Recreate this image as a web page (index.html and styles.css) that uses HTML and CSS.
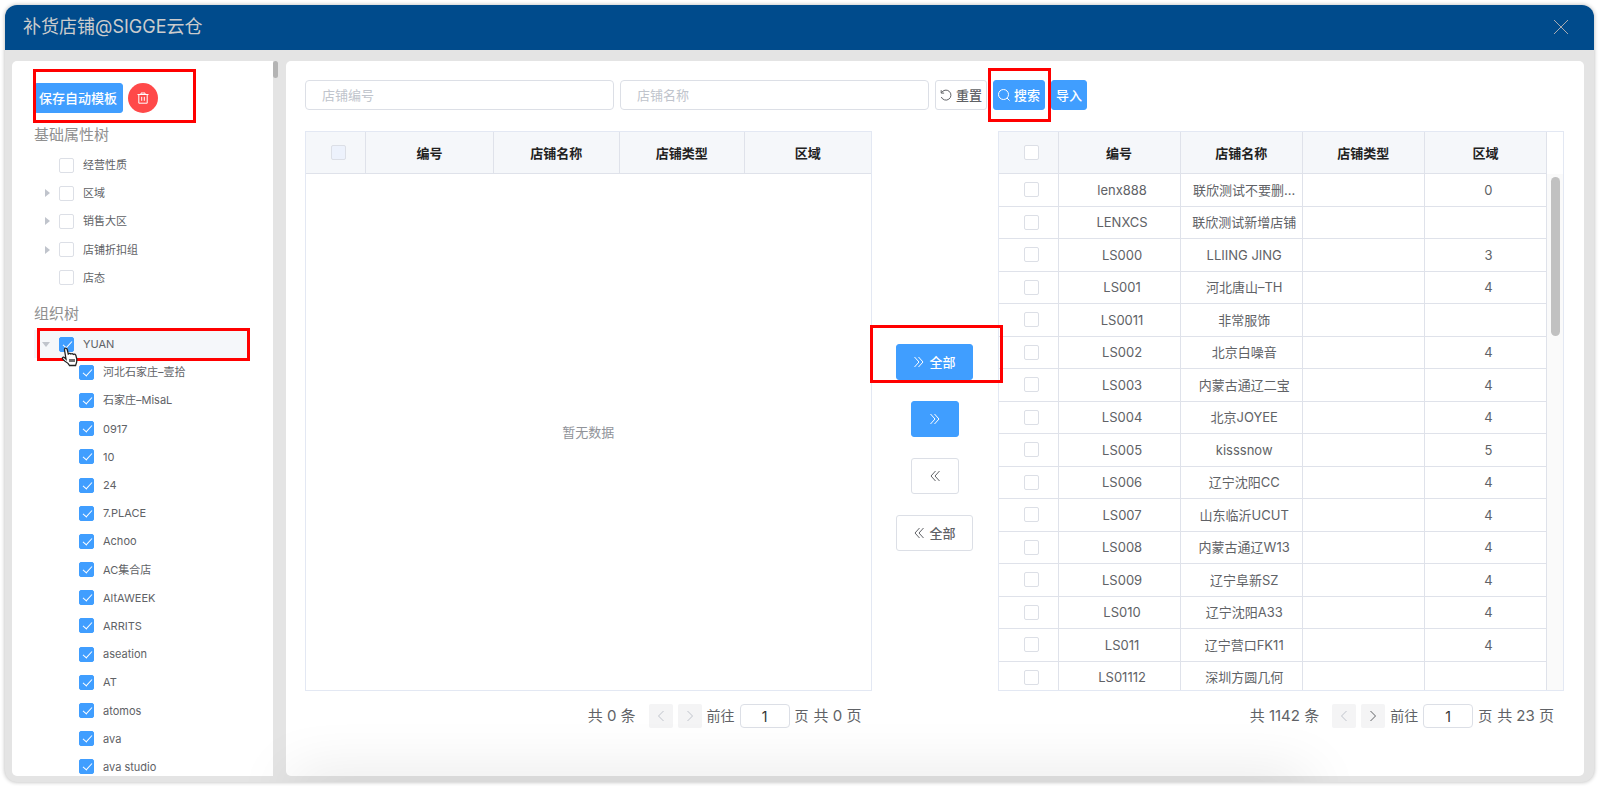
FILE: index.html
```html
<!DOCTYPE html>
<html lang="zh-CN">
<head>
    <meta charset="UTF-8">
    <meta name="viewport" content="width=device-width, initial-scale=1.0">
    <title>补货店铺</title>
    <link rel="stylesheet" href="styles.css">
</head>
<body>
    <div class="dialog">
        <header class="dialog-header">
            <h1>补货店铺@SIGGE云仓</h1>
            <button type="button" class="close-btn" aria-label="关闭">
                <svg viewBox="0 0 16 16" width="16" height="16"><path d="M1 1l14 14M15 1L1 15"/></svg>
            </button>
        </header>

        <div class="dialog-body">
            <!-- Left trees -->
            <aside class="side">
                <div class="side-actions">
                    <button type="button" class="btn btn-primary">保存自动模板</button>
                    <button type="button" class="delete-btn" aria-label="删除">
                        <svg viewBox="0 0 12 12" width="12" height="12"><path d="M0.5 2.5h11M4 2.5v-1.500h4v1.500M1.800 2.500v8.700h8.400v-8.700M4.700 4.800v4M7.300 4.800v4"/></svg>
                    </button>
                    <span class="mark mark-save"></span>
                </div>

                <h2>基础属性树</h2>
                <div class="tree tree-base" id="baseTree"></div>

                <h2>组织树</h2>
                <div class="tree tree-org" id="orgTree"></div>
            </aside>
            <div class="side-scroll"></div>

            <!-- Transfer area -->
            <main class="main">
                <form class="search-bar">
                    <input type="text" placeholder="店铺编号" aria-label="店铺编号">
                    <input type="text" placeholder="店铺名称" aria-label="店铺名称">
                    <button type="button" class="btn">
                        <svg viewBox="0 0 12 12" width="12" height="12"><path d="M1.500 3.800A5 5 0 1 1 1.300 8M1.200 1.200v2.900h2.900"/></svg>
                        重置
                    </button>
                    <div class="search-wrap">
                        <button type="button" class="btn btn-primary">
                            <svg viewBox="0 0 12 12" width="12" height="12"><circle cx="5.500" cy="5.500" r="5"/><path d="M9 9l2.600 2.600"/></svg>
                            搜索
                        </button>
                        <span class="mark mark-search"></span>
                    </div>
                    <button type="button" class="btn btn-primary">导入</button>
                </form>

                <div class="transfer">
                    <section class="list">
                        <div class="table-box">
                            <table class="head-only">
                                <colgroup><col class="col-check"><col class="col-code"><col><col><col></colgroup>
                                <thead>
                                    <tr>
                                        <th><input type="checkbox" aria-label="全选" disabled></th>
                                        <th>编号</th>
                                        <th>店铺名称</th>
                                        <th>店铺类型</th>
                                        <th>区域</th>
                                    </tr>
                                </thead>
                            </table>
                            <div class="empty">暂无数据</div>
                        </div>
                        <div class="pager">
                            <span class="total">共 0 条</span>
                            <button type="button" class="page-btn" aria-label="上一页" disabled><svg viewBox="0 0 12 12" width="12" height="12"><path d="M8.500 1L3.500 6l5 5"/></svg></button>
                            <button type="button" class="page-btn" aria-label="下一页" disabled><svg viewBox="0 0 12 12" width="12" height="12"><path d="M3.500 1l5 5-5 5"/></svg></button>
                            <label for="leftPage">前往</label>
                            <input type="text" id="leftPage" value="1">
                            <span>页</span>
                            <span class="pages">共 0 页</span>
                        </div>
                    </section>

                    <div class="transfer-btns">
                        <div class="all-wrap">
                            <button type="button" class="btn btn-primary wide">
                                <svg viewBox="0 0 12 12" width="12" height="12"><path d="M1.500 1l4.500 5-4.500 5M5.500 1L10 6l-4.500 5"/></svg>
                                全部
                            </button>
                            <span class="mark mark-all"></span>
                        </div>
                        <button type="button" class="btn btn-primary" aria-label="右移"><svg viewBox="0 0 12 12" width="12" height="12"><path d="M1.500 1l4.500 5-4.500 5M5.500 1L10 6l-4.500 5"/></svg></button>
                        <button type="button" class="btn" aria-label="左移"><svg viewBox="0 0 12 12" width="12" height="12"><path d="M10.500 1L6 6l4.500 5M6.500 1L2 6l4.500 5"/></svg></button>
                        <button type="button" class="btn wide">
                            <svg viewBox="0 0 12 12" width="12" height="12"><path d="M10.500 1L6 6l4.500 5M6.500 1L2 6l4.500 5"/></svg>
                            全部
                        </button>
                    </div>

                    <section class="list">
                        <div class="table-box has-scroll">
                            <table class="head-only">
                                <colgroup><col class="col-check"><col><col><col><col></colgroup>
                                <thead>
                                    <tr>
                                        <th><input type="checkbox" aria-label="全选"></th>
                                        <th>编号</th>
                                        <th>店铺名称</th>
                                        <th>店铺类型</th>
                                        <th>区域</th>
                                    </tr>
                                </thead>
                            </table>
                            <div class="table-scroll">
                                <table class="rows">
                                    <colgroup><col class="col-check"><col><col><col><col></colgroup>
                                    <tbody id="shopRows"></tbody>
                                </table>
                                <div class="scrollbar"><span></span></div>
                            </div>
                        </div>
                        <div class="pager">
                            <span class="total">共 1142 条</span>
                            <button type="button" class="page-btn" aria-label="上一页" disabled><svg viewBox="0 0 12 12" width="12" height="12"><path d="M8.500 1L3.500 6l5 5"/></svg></button>
                            <button type="button" class="page-btn" aria-label="下一页"><svg viewBox="0 0 12 12" width="12" height="12"><path d="M3.500 1l5 5-5 5"/></svg></button>
                            <label for="rightPage">前往</label>
                            <input type="text" id="rightPage" value="1">
                            <span>页</span>
                            <span class="pages">共 23 页</span>
                        </div>
                    </section>
                </div>
            </main>
        </div>
        <div class="bottom-shade"></div>
    </div>

    <script src="script.js"></script>
</body>
</html>
```
FILE: styles.css
```css
* {
    margin: 0;
    padding: 0;
    box-sizing: border-box;
}

body {
    height: 100vh;
    padding: 5px 5px 4px;
    background-color: #fff;
    font-family: Inter, "Noto Sans CJK SC", sans-serif;
    font-size: 13px;
    line-height: 20px;
    color: #606266;
    overflow: hidden;
}

button,
input {
    font-family: inherit;
    font-size: 13px;
    line-height: 20px;
}

svg {
    flex: none;
    fill: none;
    stroke: currentColor;
    stroke-width: 1;
}

.dialog {
    position: relative;
    display: flex;
    flex-direction: column;
    height: 100%;
    background-color: #e4e4e4;
    border-radius: 12px;
    overflow: hidden;
    box-shadow: 0 0 4px rgba(0, 0, 0, 0.3);
}

.dialog-header {
    display: flex;
    justify-content: space-between;
    align-items: center;
    height: 45px;
    padding: 0 25px 2px 18px;
    background-color: #004b8c;
}

.dialog-header h1 {
    font-size: 18px;
    line-height: 24px;
    font-weight: 400;
    color: #ccc;
}

.close-btn {
    display: flex;
    border: none;
    background: none;
    color: #a8abb2;
    cursor: pointer;
}

.dialog-body {
    flex: 1;
    display: flex;
    min-height: 0;
    padding: 11px 10px 6px 7px;
}

/* side trees */
.side {
    width: 261px;
    padding: 22px 24px 0 22px;
    background-color: #fff;
    border-radius: 5px 0 0 5px;
    overflow: hidden;
}

.side-scroll {
    width: 5px;
    height: 17px;
    margin-right: 8px;
    border-radius: 3px;
    background-color: #b4b4b4;
}

.side-actions {
    position: relative;
    display: flex;
    gap: 5px;
    height: 30px;
    margin-bottom: 10px;
}

.side h2 {
    font-size: 15px;
    line-height: 24px;
    font-weight: 400;
    color: #909090;
}

.btn {
    display: flex;
    justify-content: center;
    align-items: center;
    gap: 4px;
    height: 30px;
    border: 1px solid #dcdfe6;
    border-radius: 3px;
    background-color: #fff;
    color: #606266;
    font-weight: 500;
    white-space: nowrap;
    cursor: pointer;
}

.btn-primary {
    background-color: #409eff;
    border-color: #409eff;
    color: #fff;
}

.side-actions .btn {
    padding: 0 5px 0 4px;
}

.delete-btn {
    display: flex;
    justify-content: center;
    align-items: center;
    width: 30px;
    height: 30px;
    border: none;
    border-radius: 50%;
    background-color: #ff4949;
    color: #fff;
    cursor: pointer;
}

.mark {
    position: absolute;
    border: 3px solid #f00;
    pointer-events: none;
}

.mark-save {
    top: -14px;
    left: -1px;
    width: 163px;
    height: 54px;
}

.tree {
    display: grid;
    grid-auto-rows: 1fr;
    font-size: 11px;
}

.tree-base {
    height: 141px;
    margin: 4px 0 10px;
}

.tree-org {
    height: 451px;
    margin-top: 4px;
}

.tree-row {
    position: relative;
    display: flex;
    align-items: center;
    padding-left: 8px;
}

.tree-row.child {
    padding-left: 27px;
}

.tree-row.current {
    background-color: #f5f7fa;
}

.arrow {
    width: 9px;
    margin-right: 8px;
}

.child .arrow {
    margin-right: 9px;
}

.arrow::before {
    content: "";
    display: block;
    width: 0;
    margin-left: 3px;
    border: 4px solid transparent;
    border-left: 5px solid #c0c4cc;
    border-right: none;
}

.arrow.none::before {
    visibility: hidden;
}

.arrow.open::before {
    margin-left: 0;
    border: 4px solid transparent;
    border-top: 5px solid #c0c4cc;
    border-bottom: none;
}

.tree-row label {
    margin-left: 9px;
}

.mark-row {
    top: -2px;
    left: 3px;
    right: -1px;
    bottom: -3px;
}

.cursor {
    position: absolute;
    z-index: 2;
    top: 17px;
    left: 27px;
}

input[type="checkbox"] {
    flex: none;
    display: block;
    appearance: none;
    width: 15px;
    height: 15px;
    border: 1px solid #dcdfe6;
    border-radius: 2px;
    background-color: #fff;
}

input[type="checkbox"]:disabled {
    background-color: #edf2fc;
}

input[type="checkbox"]:checked {
    border-color: #409eff;
    background-color: #409eff;
}

input[type="checkbox"]:checked::after {
    content: "";
    display: block;
    width: 4px;
    height: 8px;
    margin: 1px 0 0 5px;
    border: solid #fff;
    border-width: 0 1px 1px 0;
    transform: rotate(42deg);
}

/* main */
.main {
    flex: 1;
    min-width: 0;
    display: flex;
    flex-direction: column;
    padding: 19px 20px 48px 19px;
    background-color: #fff;
    border-radius: 5px;
}

.search-bar {
    display: flex;
    gap: 6px;
    margin-bottom: 21px;
}

.search-bar input {
    width: 309px;
    height: 30px;
    padding: 0 16px;
    border: 1px solid #dcdfe6;
    border-radius: 4px;
    outline: none;
}

.search-bar input::placeholder {
    color: #c0c4cc;
}

.search-bar .btn {
    padding: 0 4px;
}

.search-wrap,
.all-wrap {
    position: relative;
}

.mark-search {
    top: -12px;
    left: -5px;
    right: -6px;
    bottom: -12px;
}

.transfer {
    flex: 1;
    display: flex;
    min-height: 0;
}

.list {
    flex: 1;
    min-width: 0;
    display: flex;
    flex-direction: column;
}

.table-box {
    flex: 1;
    min-height: 0;
    display: flex;
    flex-direction: column;
    border: 1px solid #e3e8f3;
}

table {
    width: 100%;
    table-layout: fixed;
    border-collapse: separate;
    border-spacing: 0;
}

.has-scroll .head-only {
    width: calc(100% - 16px);
}

.col-check {
    width: 60px;
}

.col-code {
    width: 128px;
}

th,
td {
    border-right: 1px solid #dfe2ea;
    border-bottom: 1px solid #dfe2ea;
    text-align: center;
    white-space: nowrap;
    overflow: hidden;
    text-overflow: ellipsis;
}

th {
    height: 42px;
    background-color: #f5f7fa;
    color: #222;
    font-weight: 700;
}

.list:first-child th:last-child {
    border-right: none;
}

th input[type="checkbox"],
td input[type="checkbox"] {
    margin: 0 auto;
}

th:first-child,
td:first-child {
    padding: 0 0 0 6px;
}

td {
    padding: 0 2px 0 8px;
}

.table-scroll {
    flex: 1;
    min-height: 0;
    display: flex;
    align-items: flex-start;
    overflow: hidden;
}

.rows {
    height: 520px;
}

.scrollbar {
    flex: none;
    align-self: stretch;
    width: 16px;
    padding: 3px 3px 0 4px;
    background-color: #fafafa;
}

.scrollbar span {
    display: block;
    height: 159px;
    border-radius: 5px;
    background-color: #c1c1c1;
}

.empty {
    flex: 1;
    display: flex;
    justify-content: center;
    align-items: center;
    color: #909399;
}

.transfer-btns {
    flex: none;
    width: 126px;
    display: flex;
    flex-direction: column;
    align-items: center;
    gap: 21px;
    padding-top: 213px;
}

.transfer-btns .btn {
    width: 48px;
    height: 36px;
}

.transfer-btns .wide {
    width: 77px;
}

.mark-all {
    top: -19px;
    left: -26px;
    right: -30px;
    bottom: -3px;
}

.pager {
    display: flex;
    justify-content: flex-end;
    align-items: center;
    gap: 5px;
    height: 24px;
    margin-top: 13px;
    padding-right: 10px;
    font-size: 14px;
    white-space: pre;
}

.total,
.pages {
    font-size: 15px;
}

.total {
    margin-right: 8px;
}

.page-btn {
    display: flex;
    justify-content: center;
    align-items: center;
    width: 24px;
    height: 24px;
    border: none;
    border-radius: 2px;
    background-color: #f4f4f5;
    color: #606266;
}

.page-btn:disabled {
    color: #c0c4cc;
}

.pager input {
    width: 50px;
    height: 24px;
    border: 1px solid #dcdfe6;
    border-radius: 4px;
    text-align: center;
    font-size: 14px;
    color: #333;
}

/* soft shadow rising from the bottom edge */
.bottom-shade {
    position: absolute;
    left: 18%;
    right: 18%;
    bottom: -20px;
    height: 20px;
    box-shadow: 0 0 60px rgba(0, 0, 0, 0.2);
    pointer-events: none;
}
```
FILE: script.js
```javascript
const baseNodes = [
    ['经营性质', false],
    ['区域', true],
    ['销售大区', true],
    ['店铺折扣组', true],
    ['店态', false]
];

const orgNodes = ['河北石家庄–壹拾', '石家庄–MisaL', '0917', '10', '24', '7.PLACE', 'Achoo',
    'AC集合店', 'AltAWEEK', 'ARRITS', 'aseation', 'AT', 'atomos', 'ava', 'ava studio'];

const shops = [
    ['lenx888', '联欣测试不要删...', '0'],
    ['LENXCS', '联欣测试新增店铺', ''],
    ['LS000', 'LLIING JING', '3'],
    ['LS001', '河北唐山–TH', '4'],
    ['LS0011', '非常服饰', ''],
    ['LS002', '北京白噪音', '4'],
    ['LS003', '内蒙古通辽二宝', '4'],
    ['LS004', '北京JOYEE', '4'],
    ['LS005', 'kisssnow', '5'],
    ['LS006', '辽宁沈阳CC', '4'],
    ['LS007', '山东临沂UCUT', '4'],
    ['LS008', '内蒙古通辽W13', '4'],
    ['LS009', '辽宁阜新SZ', '4'],
    ['LS010', '辽宁沈阳A33', '4'],
    ['LS011', '辽宁营口FK11', '4'],
    ['LS01112', '深圳方圆几何', '']
];

const cursor = `<svg class="cursor" viewBox="0 0 18 20" width="18" height="20">
    <path fill="#fff" stroke="#222" stroke-width="1.300" d="M5 12L3.500 3Q3.300 1.300 4.600 1.100Q5.800 1 6.200 2.500L7.300 7Q8.800 5.800 9.900 7Q11.300 6 12.300 7.400Q14 6.600 14.800 8.200L15.800 12Q16.200 15 14.600 18.500H8.500Q7.300 16 4 14.200Q1.600 12.600 1.300 11Q2 9.400 3.700 10.700ZM9 12v3M11 12v3M13 12v3"/>
</svg>`;

document.getElementById('baseTree').innerHTML = baseNodes.map(([name, hasChild], i) => `
    <div class="tree-row">
        <span class="arrow ${hasChild ? '' : 'none'}"></span>
        <input type="checkbox" id="base${i}">
        <label for="base${i}">${name}</label>
    </div>`).join('');

document.getElementById('orgTree').innerHTML = `
    <div class="tree-row current">
        <span class="arrow open"></span>
        <input type="checkbox" id="org" checked>
        <label for="org">YUAN</label>
        <span class="mark mark-row"></span>
        ${cursor}
    </div>` + orgNodes.map((name, i) => `
    <div class="tree-row child">
        <span class="arrow none"></span>
        <input type="checkbox" id="org${i}" checked>
        <label for="org${i}">${name}</label>
    </div>`).join('');

document.getElementById('shopRows').innerHTML = shops.map(([code, name, area]) => `
    <tr>
        <td><input type="checkbox" aria-label="${code}"></td>
        <td>${code}</td>
        <td>${name}</td>
        <td></td>
        <td>${area}</td>
    </tr>`).join('');
```
